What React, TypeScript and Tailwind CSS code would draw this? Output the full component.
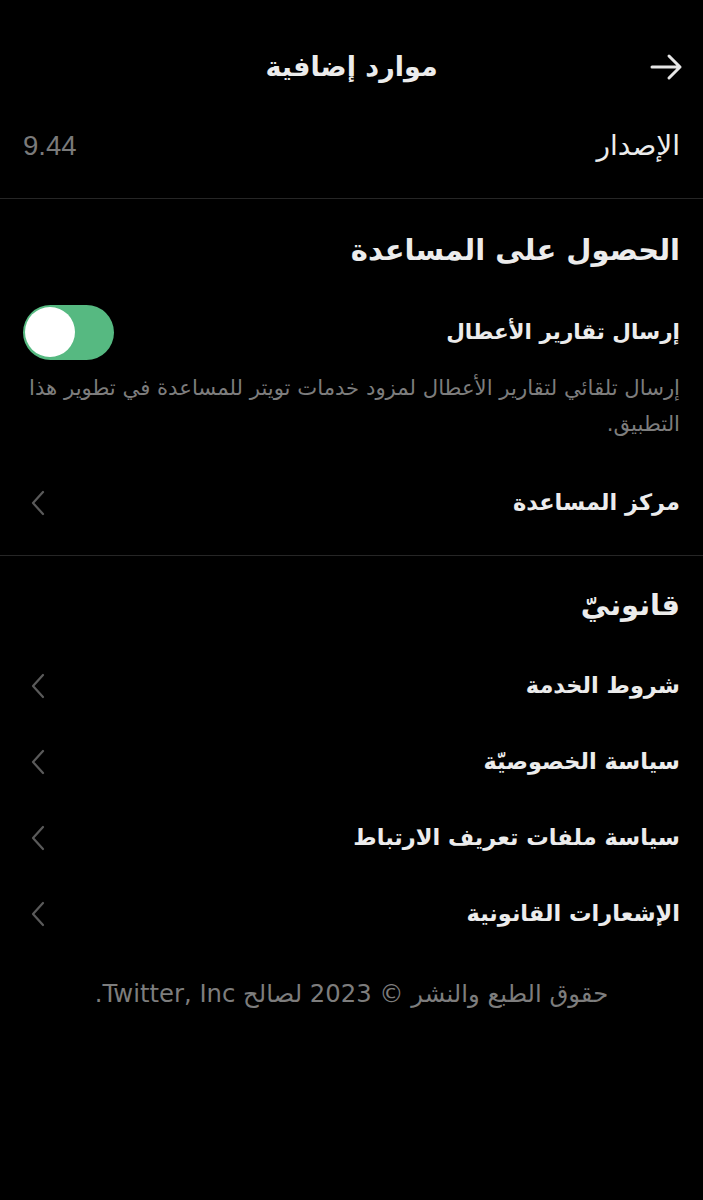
import React from "react";

const Chevron = () => (
  <svg width="14" height="26" viewBox="0 0 14 26" fill="none" className="shrink-0">
    <path d="M12 2 L2 13 L12 24" stroke="#5a5a5a" strokeWidth="2.2" strokeLinecap="round" strokeLinejoin="round" />
  </svg>
);

const Row = ({ label }: { label: string }) => (
  <div className="flex items-center justify-between h-[76px]">
    <span className="text-[22.5px] font-bold text-[#ececec]">{label}</span>
    <div className="pl-[8px]">
      <Chevron />
    </div>
  </div>
);

export default function App() {
  return (
    <div
      dir="rtl"
      className="w-[703px] h-[1200px] bg-black text-[#ececec] pt-[31px]"
      style={{ fontFamily: '"DejaVu Sans", "Noto Sans", sans-serif' }}
    >
      {/* Header */}
      <div className="relative flex items-center justify-center h-[72px]">
        <span className="text-[27px] font-bold">موارد إضافية</span>
        <div className="absolute right-[19px] top-1/2 -translate-y-1/2">
          <svg width="34" height="28" viewBox="0 0 34 28" fill="none">
            <path d="M2 14 H30 M19 3 L30 14 L19 25" stroke="#e6e6e6" strokeWidth="3" strokeLinecap="round" strokeLinejoin="round" />
          </svg>
        </div>
      </div>

      {/* Version */}
      <div className="flex items-center justify-between px-[23px] h-[86px]">
        <span className="text-[28px] text-[#ececec]">الإصدار</span>
        <span className="text-[27.5px] text-[#7a7a7a]" style={{ fontFamily: '"Liberation Sans", sans-serif' }}>9.44</span>
      </div>

      <div className="h-px bg-[#262626] mt-[9px]" />

      {/* Help section */}
      <div className="px-[23px]">
        <div className="h-[100px] flex items-center pt-[4px]">
          <span className="text-[29px] font-bold">الحصول على المساعدة</span>
        </div>
        <div className="flex items-center justify-between h-[72px] -mt-[3px]">
          <span className="text-[21.5px] font-bold">إرسال تقارير الأعطال</span>
          <div className="w-[91px] h-[55px] rounded-full bg-[#56b981] flex items-center justify-end px-[2px]">
            <div className="w-[50px] h-[50px] rounded-full bg-white" />
          </div>
        </div>
        <p className="text-[21.2px] leading-[36px] text-[#7d7d7d] mt-[2px]">
          إرسال تلقائي لتقارير الأعطال لمزود خدمات تويتر للمساعدة في تطوير هذا التطبيق.
        </p>
        <div className="mt-[23px]">
          <Row label="مركز المساعدة" />
        </div>
      </div>

      <div className="h-px bg-[#262626] mt-[14px]" />

      {/* Legal */}
      <div className="px-[23px]">
        <div className="h-[100px] flex items-center">
          <span className="text-[29px] font-bold">قانونيّ</span>
        </div>
        <div className="-mt-[8px]">
          <Row label="شروط الخدمة" />
          <Row label="سياسة الخصوصيّة" />
          <Row label="سياسة ملفات تعريف الارتباط" />
          <Row label="الإشعارات القانونية" />
        </div>
        <div className="text-center text-[24.3px] text-[#7d7d7d] mt-[24px]">
          حقوق الطبع والنشر © 2023 لصالح Twitter, Inc.
        </div>
      </div>
    </div>
  );
}
